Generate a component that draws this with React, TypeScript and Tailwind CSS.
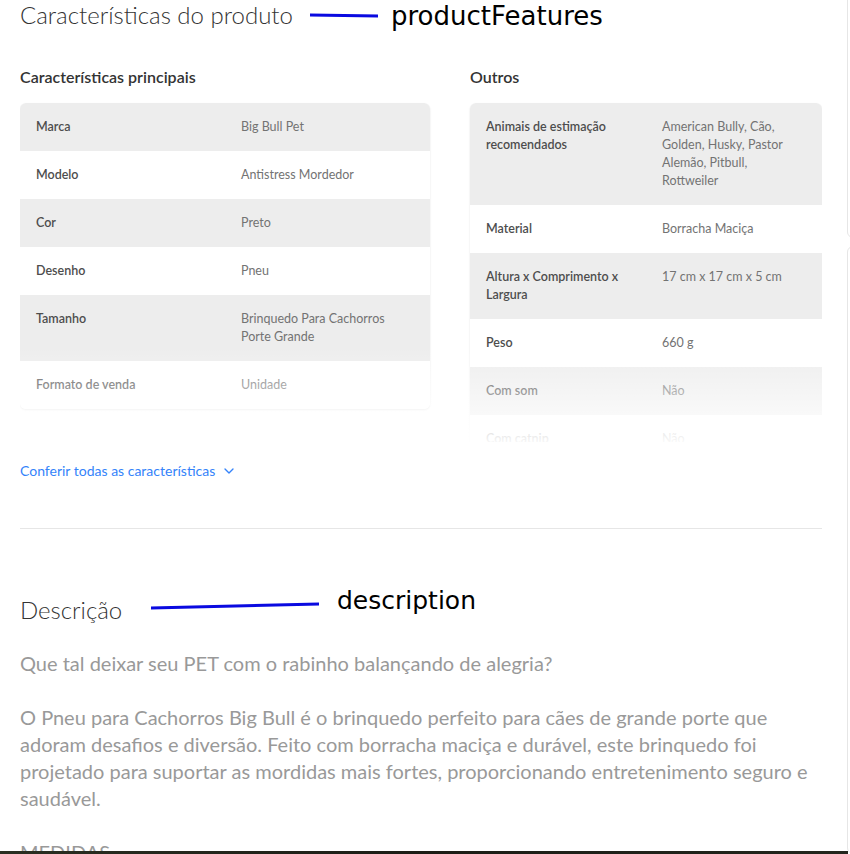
import { ChevronDown } from "lucide-react";

type Row = { label: string; value: string };

const principais: Row[] = [
  { label: "Marca", value: "Big Bull Pet" },
  { label: "Modelo", value: "Antistress Mordedor" },
  { label: "Cor", value: "Preto" },
  { label: "Desenho", value: "Pneu" },
  { label: "Tamanho", value: "Brinquedo Para Cachorros Porte Grande" },
  { label: "Formato de venda", value: "Unidade" },
];

const outros: Row[] = [
  {
    label: "Animais de estimação recomendados",
    value: "American Bully, Cão, Golden, Husky, Pastor Alemão, Pitbull, Rottweiler",
  },
  { label: "Material", value: "Borracha Maciça" },
  { label: "Altura x Comprimento x Largura", value: "17 cm x 17 cm x 5 cm" },
  { label: "Peso", value: "660 g" },
  { label: "Com som", value: "Não" },
  { label: "Com catnip", value: "Não" },
];

const font = "font-['Lato','Open_Sans',sans-serif]";

function SpecTable({ title, rows, width }: { title: string; rows: Row[]; width: string }) {
  return (
    <div className={width}>
      <h3 className="text-[16px] leading-[20px] font-semibold text-[#333] mb-4">{title}</h3>
      <div className="rounded-md overflow-hidden shadow-[0_1px_2px_rgba(0,0,0,0.12)]">
        {rows.map((row, i) => (
          <div
            key={row.label}
            className={`grid grid-cols-2 text-[12.5px] leading-[18px] ${
              i % 2 === 0 ? "bg-[#ededed]" : "bg-white"
            }`}
          >
            <div className="px-4 py-[15px] font-semibold text-[#4d4d4d]">{row.label}</div>
            <div className="px-4 py-[15px] text-[#737373]">{row.value}</div>
          </div>
        ))}
      </div>
    </div>
  );
}

export default function App() {
  return (
    <div className={`relative w-[850px] h-[854px] overflow-hidden bg-white flex ${font}`}>
      {/* conteúdo principal */}
      <div className="w-[847px] shrink-0 pl-5 pr-[25px]">
        <h2 className="text-[24px] leading-[30px] font-light text-[#333]">Características do produto</h2>

        <div className="relative h-[375px] overflow-hidden mt-[37px]">
          <div className="flex gap-10">
            <SpecTable title="Características principais" rows={principais} width="w-[410px]" />
            <SpecTable title="Outros" rows={outros} width="w-[352px]" />
          </div>
          <div className="absolute inset-x-0 bottom-0 h-[95px] bg-gradient-to-b from-white/0 to-white/95" />
        </div>

        <button className="mt-[20px] flex items-center gap-1.5 text-[14px] leading-[18px] text-[#3483fa]">
          Conferir todas as características
          <ChevronDown size={16} strokeWidth={2} />
        </button>

        <div className="mt-[48px] border-t border-[#e6e6e6]" />

        <h2 className="mt-[66px] text-[24px] leading-[30px] font-light text-[#333]">Descrição</h2>

        <div className="mt-[25px] text-[20px] leading-[27px] text-[#999] whitespace-pre-line">
          {"Que tal deixar seu PET com o rabinho balançando de alegria?\n\nO Pneu para Cachorros Big Bull é o brinquedo perfeito para cães de grande porte que adoram desafios e diversão. Feito com borracha maciça e durável, este brinquedo foi projetado para suportar as mordidas mais fortes, proporcionando entretenimento seguro e saudável.\n\nMEDIDAS"}
        </div>
      </div>

      {/* coluna lateral */}
      <div className="w-[300px] shrink-0 flex flex-col gap-2">
        <div className="h-[250px] -mt-[12px] border border-[#e6e6e6] rounded-md" />
        <div className="flex-1 border border-[#e6e6e6] rounded-md" />
      </div>

      {/* faixa da imagem no rodapé */}
      <div className="absolute left-0 bottom-0 w-[848px] h-[3px] bg-gradient-to-r from-[#2a2f22] via-[#1c1d16] to-[#23261d]" />

      {/* anotações */}
      <svg className="absolute left-0 top-0 pointer-events-none" width="850" height="854">
        <line x1="310" y1="15" x2="378" y2="16" stroke="#0a0ae0" strokeWidth="3" />
        <line x1="151" y1="608" x2="319" y2="604" stroke="#0a0ae0" strokeWidth="3" />
      </svg>
      <span className="absolute left-[391px] top-[0px] text-[26px] leading-[32px] text-black font-['DejaVu_Sans',sans-serif]">
        productFeatures
      </span>
      <span className="absolute left-[337px] top-[585px] text-[25px] leading-[32px] text-black font-['DejaVu_Sans',sans-serif]">
        description
      </span>
    </div>
  );
}
